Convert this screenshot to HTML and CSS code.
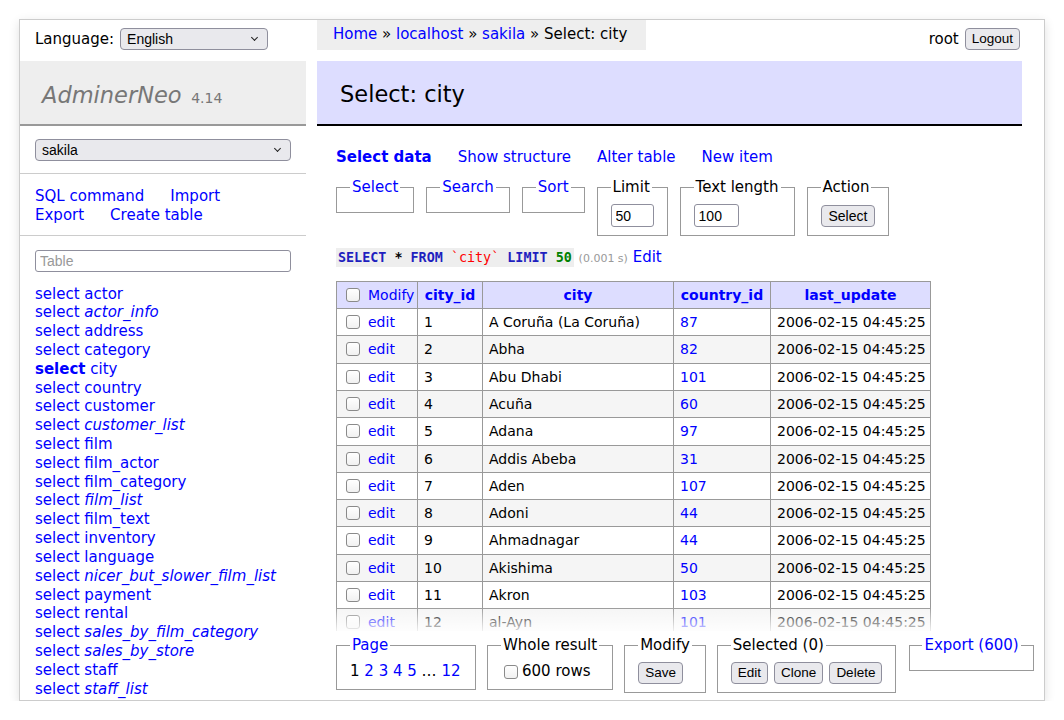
FILE: index.html
```html
<!DOCTYPE html>
<html lang="en">
<head>
<meta charset="utf-8">
<title>Select: city - AdminerNeo</title>
<link rel="stylesheet" href="styles.css">
</head>
<body>
<div class="frame">
  <aside class="menu">
    <div class="lang">
      <span class="lang-label">Language:</span>
      <span class="selbox sel-lang"><select><option>English</option></select></span>
    </div>
    <h1 class="logo"><span class="brand">AdminerNeo</span> <span class="ver">4.14</span></h1>
    <div class="dbsel">
      <span class="selbox sel-db"><select><option>sakila</option></select></span>
    </div>
    <div class="links">
      <a href="#">SQL command</a>
      <a href="#">Import</a>
      <a href="#">Export</a>
      <a href="#">Create table</a>
    </div>
    <div class="filter"><input type="text" placeholder="Table"></div>
    <ul class="tables">
      <li><a href="#">select</a> <a href="#">actor</a></li>
      <li><a href="#">select</a> <a href="#" class="view">actor_info</a></li>
      <li><a href="#">select</a> <a href="#">address</a></li>
      <li><a href="#">select</a> <a href="#">category</a></li>
      <li><a href="#" class="active">select</a> <a href="#">city</a></li>
      <li><a href="#">select</a> <a href="#">country</a></li>
      <li><a href="#">select</a> <a href="#">customer</a></li>
      <li><a href="#">select</a> <a href="#" class="view">customer_list</a></li>
      <li><a href="#">select</a> <a href="#">film</a></li>
      <li><a href="#">select</a> <a href="#">film_actor</a></li>
      <li><a href="#">select</a> <a href="#">film_category</a></li>
      <li><a href="#">select</a> <a href="#" class="view">film_list</a></li>
      <li><a href="#">select</a> <a href="#">film_text</a></li>
      <li><a href="#">select</a> <a href="#">inventory</a></li>
      <li><a href="#">select</a> <a href="#">language</a></li>
      <li><a href="#">select</a> <a href="#" class="view">nicer_but_slower_film_list</a></li>
      <li><a href="#">select</a> <a href="#">payment</a></li>
      <li><a href="#">select</a> <a href="#">rental</a></li>
      <li><a href="#">select</a> <a href="#" class="view">sales_by_film_category</a></li>
      <li><a href="#">select</a> <a href="#" class="view">sales_by_store</a></li>
      <li><a href="#">select</a> <a href="#">staff</a></li>
      <li><a href="#">select</a> <a href="#" class="view">staff_list</a></li>
    </ul>
  </aside>

  <main class="content">
    <div class="top">
      <div class="crumb"><a href="#">Home</a> » <a href="#">localhost</a> » <a href="#">sakila</a> » Select: city</div>
      <div class="logout"><span>root</span><button class="btn">Logout</button></div>
    </div>
    <h2 class="title">Select: city</h2>

    <div class="scroll">
      <p class="tabs">
        <a href="#" class="cur">Select data</a>
        <a href="#">Show structure</a>
        <a href="#">Alter table</a>
        <a href="#">New item</a>
      </p>

      <div class="opts">
        <fieldset class="fs-empty"><legend><a href="#">Select</a></legend></fieldset>
        <fieldset class="fs-empty"><legend><a href="#">Search</a></legend></fieldset>
        <fieldset class="fs-empty"><legend><a href="#">Sort</a></legend></fieldset>
        <fieldset><legend>Limit</legend><input type="text" class="num num-limit" value="50"></fieldset>
        <fieldset><legend>Text length</legend><input type="text" class="num num-len" value="100"></fieldset>
        <fieldset><legend>Action</legend><button class="btn btn-sel">Select</button></fieldset>
      </div>

      <p class="sql"><code><b class="kw">SELECT</b> <b>*</b> <b class="kw">FROM</b> <span class="bac">`city`</span> <b class="kw">LIMIT</b> <b class="numv">50</b></code> <span class="time">(0.001 s)</span> <a href="#">Edit</a></p>

      <table class="data">
        <colgroup>
          <col class="c-mod"><col class="c-id"><col class="c-city"><col class="c-cid"><col class="c-upd">
        </colgroup>
        <thead>
          <tr>
            <th class="left"><input type="checkbox" class="cb"><a href="#" class="mod">Modify</a></th>
            <th><a href="#">city_id</a></th>
            <th><a href="#">city</a></th>
            <th><a href="#">country_id</a></th>
            <th><a href="#">last_update</a></th>
          </tr>
        </thead>
        <tbody>
          <tr><td><input type="checkbox" class="cb"><a href="#" class="mod">edit</a></td><td>1</td><td>A Coruña (La Coruña)</td><td><a href="#">87</a></td><td>2006-02-15 04:45:25</td></tr>
          <tr><td><input type="checkbox" class="cb"><a href="#" class="mod">edit</a></td><td>2</td><td>Abha</td><td><a href="#">82</a></td><td>2006-02-15 04:45:25</td></tr>
          <tr><td><input type="checkbox" class="cb"><a href="#" class="mod">edit</a></td><td>3</td><td>Abu Dhabi</td><td><a href="#">101</a></td><td>2006-02-15 04:45:25</td></tr>
          <tr><td><input type="checkbox" class="cb"><a href="#" class="mod">edit</a></td><td>4</td><td>Acuña</td><td><a href="#">60</a></td><td>2006-02-15 04:45:25</td></tr>
          <tr><td><input type="checkbox" class="cb"><a href="#" class="mod">edit</a></td><td>5</td><td>Adana</td><td><a href="#">97</a></td><td>2006-02-15 04:45:25</td></tr>
          <tr><td><input type="checkbox" class="cb"><a href="#" class="mod">edit</a></td><td>6</td><td>Addis Abeba</td><td><a href="#">31</a></td><td>2006-02-15 04:45:25</td></tr>
          <tr><td><input type="checkbox" class="cb"><a href="#" class="mod">edit</a></td><td>7</td><td>Aden</td><td><a href="#">107</a></td><td>2006-02-15 04:45:25</td></tr>
          <tr><td><input type="checkbox" class="cb"><a href="#" class="mod">edit</a></td><td>8</td><td>Adoni</td><td><a href="#">44</a></td><td>2006-02-15 04:45:25</td></tr>
          <tr><td><input type="checkbox" class="cb"><a href="#" class="mod">edit</a></td><td>9</td><td>Ahmadnagar</td><td><a href="#">44</a></td><td>2006-02-15 04:45:25</td></tr>
          <tr><td><input type="checkbox" class="cb"><a href="#" class="mod">edit</a></td><td>10</td><td>Akishima</td><td><a href="#">50</a></td><td>2006-02-15 04:45:25</td></tr>
          <tr><td><input type="checkbox" class="cb"><a href="#" class="mod">edit</a></td><td>11</td><td>Akron</td><td><a href="#">103</a></td><td>2006-02-15 04:45:25</td></tr>
          <tr><td><input type="checkbox" class="cb"><a href="#" class="mod">edit</a></td><td>12</td><td>al-Ayn</td><td><a href="#">101</a></td><td>2006-02-15 04:45:25</td></tr>
        </tbody>
      </table>
    </div>

    <div class="footer">
      <fieldset class="fs-page"><legend><a href="#">Page</a></legend><span class="pages">1 <a href="#">2</a> <a href="#">3</a> <a href="#">4</a> <a href="#">5</a> … <a href="#">12</a></span></fieldset>
      <fieldset><legend>Whole result</legend><label class="whole"><input type="checkbox" class="cb">600 rows</label></fieldset>
      <fieldset><legend>Modify</legend><button class="btn">Save</button></fieldset>
      <fieldset><legend>Selected (0)</legend><span class="btns"><button class="btn">Edit</button><button class="btn">Clone</button><button class="btn">Delete</button></span></fieldset>
      <fieldset class="fs-empty fs-export"><legend><a href="#">Export (600)</a></legend></fieldset>
    </div>
  </main>
</div>
</body>
</html>
```

FILE: styles.css
```css
html, body {
  margin: 0;
  background: #fff;
}

body {
  font-family: "DejaVu Sans", Verdana, sans-serif;
  font-size: 15px;
  line-height: 1.25;
  color: #000;
}

a {
  color: #00f;
  text-decoration: none;
}

.frame {
  margin: 19px 0 0 19px;
  width: 1024px;
  height: 680px;
  border: 1px solid #ccc;
  box-shadow: 0 3px 10px rgba(0, 0, 0, 0.12);
  display: flex;
  overflow: hidden;
  background: #fff;
}

/* ---------- form controls ---------- */
.btn {
  font-family: "Liberation Sans", Arial, sans-serif;
  font-size: 13.5px;
  height: 22px;
  padding: 0 6px;
  margin: 0;
  background: #e9e9ed;
  border: 1px solid #8f8f9d;
  border-radius: 4px;
  color: #000;
  line-height: 20px;
}

.btn-sel {
  padding: 0 7px;
  font-size: 14px;
}

.selbox {
  position: relative;
  display: inline-block;
  height: 22px;
}

.selbox select {
  appearance: none;
  -webkit-appearance: none;
  box-sizing: border-box;
  width: 100%;
  height: 22px;
  margin: 0;
  padding: 0 20px 0 6px;
  font-family: "Liberation Sans", Arial, sans-serif;
  font-size: 14px;
  color: #000;
  background: #e9e9ed;
  border: 1px solid #8f8f9d;
  border-radius: 4px;
}

.selbox::after {
  content: "";
  position: absolute;
  right: 11px;
  top: 7px;
  width: 4px;
  height: 4px;
  border-right: 1.5px solid #222;
  border-bottom: 1.5px solid #222;
  transform: rotate(45deg);
  pointer-events: none;
}

.sel-lang {
  width: 148px;
}

.sel-db {
  width: 256px;
}

input[type="text"] {
  box-sizing: border-box;
  height: 23px;
  margin: 0;
  padding: 0 4px;
  font-family: "Liberation Sans", Arial, sans-serif;
  font-size: 14px;
  border: 1px solid #8f8f9d;
  border-radius: 3px;
  background: #fff;
  color: #000;
}

input::placeholder {
  color: #999;
}

.cb {
  appearance: none;
  -webkit-appearance: none;
  box-sizing: border-box;
  width: 14px;
  height: 14px;
  margin: 0;
  border: 1.5px solid #8a8a8a;
  border-radius: 3px;
  background: linear-gradient(#fff, #f1f1f1);
  vertical-align: -2px;
}

/* ---------- sidebar ---------- */
.menu {
  width: 286px;
  flex: none;
  display: flex;
  flex-direction: column;
  overflow: hidden;
}

.lang {
  flex: none;
  box-sizing: border-box;
  height: 41px;
  padding: 8px 0 0 15px;
  display: flex;
  align-items: flex-start;
  gap: 6px;
  line-height: 22px;
}

.logo {
  flex: none;
  margin: 0;
  height: 63px;
  line-height: 63px;
  background: #eee;
  border-bottom: 2px solid #999;
  padding-left: 22px;
  font-weight: normal;
  color: #777;
  white-space: nowrap;
}

.brand {
  font-size: 22.5px;
  font-style: italic;
}

.ver {
  font-size: 14px;
}

.dbsel {
  flex: none;
  padding: 13px 15px 12px;
  border-bottom: 1px solid #ccc;
  line-height: 22px;
}

.links {
  flex: none;
  padding: 13px 15px 10px;
  border-bottom: 1px solid #ccc;
  display: flex;
  flex-wrap: wrap;
  column-gap: 26px;
}

.filter {
  flex: none;
  padding: 14px 15px 0;
}

.filter input {
  width: 256px;
  height: 22px;
}

.tables {
  flex: none;
  list-style: none;
  margin: 13px 0 0;
  padding: 0 15px;
  white-space: nowrap;
  line-height: 18.82px;
}

.tables .view {
  font-style: italic;
}

.tables .active {
  font-weight: bold;
}

/* ---------- content ---------- */
.content {
  flex: none;
  width: 705px;
  margin-left: 11px;
  display: flex;
  flex-direction: column;
  min-height: 0;
}

.top {
  height: 30px;
  flex: none;
  display: flex;
  justify-content: space-between;
  align-items: flex-start;
}

.crumb {
  height: 30px;
  line-height: 28px;
  padding: 0 19px 0 16px;
  background: #eee;
  white-space: nowrap;
}

.logout {
  padding-top: 8px;
  margin-right: 2px;
  display: flex;
  align-items: center;
  gap: 6px;
  line-height: 22px;
}

.title {
  flex: none;
  margin: 11px 0 0;
  height: 61px;
  line-height: 63px;
  padding: 2px 0 0 23px;
  background: #ddf;
  border-bottom: 2px solid #000;
  font-size: 22.5px;
  font-weight: normal;
}

.scroll {
  flex: 1;
  min-height: 0;
  overflow: hidden;
  padding-left: 19px;
}

.tabs {
  margin: 21.5px 0 0;
  display: flex;
  gap: 26px;
}

.tabs .cur {
  font-weight: bold;
}

fieldset {
  flex: none;
  margin: 0;
  padding: 7.5px 13px;
  border: 1px solid #999;
}

legend {
  padding: 0 2px;
  white-space: nowrap;
}

.opts {
  display: flex;
  align-items: flex-start;
  gap: 12px;
  margin-top: 11.5px;
}

.num-limit {
  width: 43px;
}

.num-len {
  width: 45px;
}

.opts .btn {
  margin-top: 1px;
}

.sql {
  margin: 12.5px 0 0;
}

.sql code {
  font-family: "DejaVu Sans Mono", monospace;
  font-size: 13.4px;
  background: #eee;
  padding: 2px;
}

.sql .kw {
  color: #1f1fbf;
}

.sql .bac {
  color: #f00;
}

.sql .numv {
  color: #008000;
}

.time {
  color: #999;
  font-size: 11px;
}

/* ---------- table ---------- */
.data {
  margin-top: 14px;
  border-collapse: collapse;
  table-layout: fixed;
  width: 594px;
  font-size: 14px;
  line-height: 18.3px;
}

.c-mod { width: 81px; }
.c-id { width: 65px; }
.c-city { width: 191px; }
.c-cid { width: 97px; }
.c-upd { width: 160px; }

.data th,
.data td {
  border: 1px solid #999;
  padding: 4px 6px;
  white-space: nowrap;
  overflow: hidden;
  text-align: left;
}

.data th {
  background: #ddf;
  text-align: center;
  font-weight: bold;
}

.data th.left {
  text-align: left;
  font-weight: normal;
}

.data tbody tr:nth-child(2n) {
  background: #f5f5f5;
}

.data .cb {
  margin: 0 8px 0 3px;
}

/* ---------- footer ---------- */
.footer {
  flex: none;
  position: relative;
  box-sizing: border-box;
  height: 69px;
  padding: 5px 0 0 19px;
  display: flex;
  align-items: flex-start;
  gap: 11px;
  background: #fff;
}

.footer::before {
  content: "";
  position: absolute;
  left: 0;
  right: 0;
  top: -24px;
  height: 24px;
  background: linear-gradient(rgba(255, 255, 255, 0), rgba(255, 255, 255, 0.85));
}

.fs-page {
  width: 140px;
  box-sizing: border-box;
}

.pages {
  white-space: nowrap;
}

.whole {
  display: flex;
  align-items: center;
  gap: 4px;
  padding-left: 3px;
  white-space: nowrap;
}

.btns {
  display: flex;
  gap: 6px;
}

.fs-export {
  margin-left: 2px;
  padding: 7.5px 12px;
}
```
